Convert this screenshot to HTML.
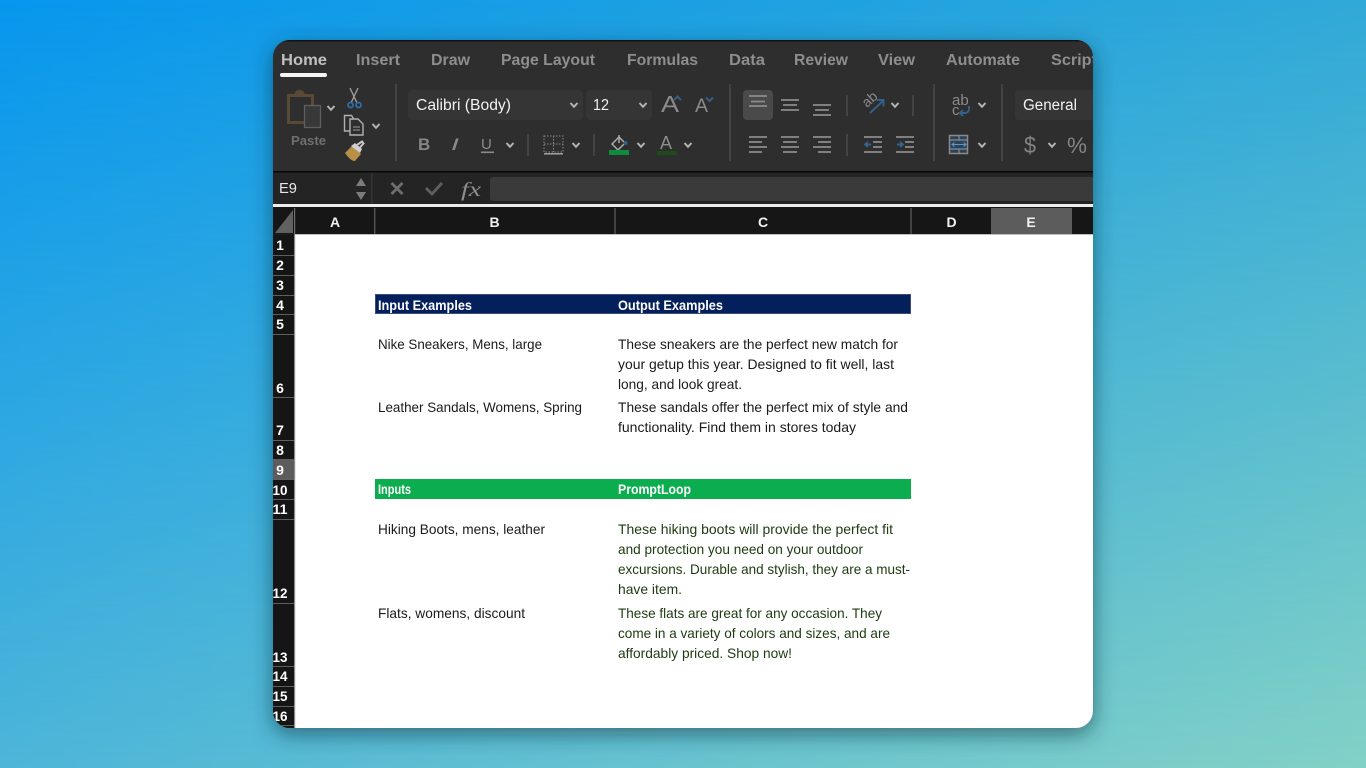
<!DOCTYPE html>
<html><head><meta charset="utf-8"><title>Excel</title>
<style>
html,body{margin:0;padding:0;width:1366px;height:768px;overflow:hidden;background:#2ba6dc}
svg{display:block;position:absolute;left:0;top:0}
text{font-family:"Liberation Sans",sans-serif}
.tab{font-size:16px;font-weight:bold;fill:#8e8e8e}
.row{font-size:14px;font-weight:bold;fill:#fff;text-anchor:middle}
.col{font-size:14px;font-weight:bold;fill:#f2f2f2;text-anchor:middle}
.cell{font-size:14px;fill:#1a1a1a}
.grn{font-size:14px;fill:#1d3a10}
.hd{font-size:14px;font-weight:bold;fill:#fff}
.dd{font-size:15.500px;fill:#f2f2f2}
.ln{stroke:#8c8c8c;stroke-width:1.8}
.blu{fill:none;stroke:#33618c;stroke-width:1.9}
.sep{stroke:#4c4c4c;stroke-width:1.5}
.chev{fill:none;stroke:#b5b5b5;stroke-width:2}
</style></head><body>
<svg width="1366" height="768" viewBox="0 0 1366 768" xmlns="http://www.w3.org/2000/svg">
<defs>
<linearGradient id="bgT" x1="0" y1="0" x2="1" y2="0"><stop offset="0" stop-color="#0797ee"/><stop offset="1" stop-color="#31a9d8"/></linearGradient>
<linearGradient id="bgB" x1="0" y1="0" x2="1" y2="0"><stop offset="0" stop-color="#4db5d8"/><stop offset="1" stop-color="#83d1c6"/></linearGradient>
<linearGradient id="vfade" x1="0" y1="0" x2="0" y2="1"><stop offset="0" stop-color="#000"/><stop offset="1" stop-color="#fff"/></linearGradient>
<mask id="vm"><rect width="1366" height="768" fill="url(#vfade)"/></mask>
<filter id="sh" x="-10%" y="-10%" width="120%" height="120%"><feDropShadow dx="0" dy="6" stdDeviation="11" flood-color="#0a3040" flood-opacity=".6"/></filter>
<clipPath id="win"><rect x="273" y="40" width="820" height="688" rx="17"/></clipPath>
<polyline id="c" points="-3.500,-2 0,1.800 3.500,-2" class="chev"/>
</defs>
<rect width="1366" height="768" fill="url(#bgT)"/>
<rect width="1366" height="768" fill="url(#bgB)" mask="url(#vm)"/>
<rect x="273" y="40" width="820" height="688" rx="17" fill="#222" filter="url(#sh)"/>
<g clip-path="url(#win)">
<rect x="273" y="40" width="820" height="131" fill="#2e2e2e"/>
<rect x="273" y="40" width="820" height="1.500" fill="#111"/>
<text class="tab" x="281" y="65" textLength="46" lengthAdjust="spacingAndGlyphs" style="fill:#c0c0c0">Home</text>
<text class="tab" x="356" y="65" textLength="44" lengthAdjust="spacingAndGlyphs">Insert</text>
<text class="tab" x="431" y="65" textLength="39" lengthAdjust="spacingAndGlyphs">Draw</text>
<text class="tab" x="501" y="65" textLength="94" lengthAdjust="spacingAndGlyphs">Page Layout</text>
<text class="tab" x="627" y="65" textLength="71" lengthAdjust="spacingAndGlyphs">Formulas</text>
<text class="tab" x="729" y="65" textLength="36" lengthAdjust="spacingAndGlyphs">Data</text>
<text class="tab" x="794" y="65" textLength="54" lengthAdjust="spacingAndGlyphs">Review</text>
<text class="tab" x="878" y="65" textLength="37" lengthAdjust="spacingAndGlyphs">View</text>
<text class="tab" x="946" y="65" textLength="74" lengthAdjust="spacingAndGlyphs">Automate</text>
<text class="tab" x="1051" y="65" textLength="46" lengthAdjust="spacingAndGlyphs">Script</text>
<rect x="280" y="73" width="47" height="4" rx="2" fill="#f4f4f4"/>

<!-- paste -->
<path d="M287 94h7l2.500-3.500 3 -1 3 1 2.500 3.500h9v11h-3v-8h-21v24h17v3h-20z" fill="#5a4934"/>
<rect x="304.500" y="105.500" width="16" height="22" fill="#383838" stroke="#5e5e5e" stroke-width="1.300"/>
<use href="#c" x="331" y="108"/>
<text x="291" y="145" font-size="13" font-weight="bold" fill="#6f6f6f" textLength="35" lengthAdjust="spacingAndGlyphs">Paste</text>
<!-- scissors -->
<path d="M350 88l7 15M358 88l-7 15" stroke="#a2a2a2" stroke-width="1.300" fill="none"/>
<circle cx="350.500" cy="105" r="2.500" fill="none" stroke="#2f6ea8" stroke-width="1.800"/>
<circle cx="358.500" cy="105" r="2.500" fill="none" stroke="#2f6ea8" stroke-width="1.800"/>
<!-- copy -->
<path d="M350 131h-5.500v-15.500h7l2 3" fill="none" stroke="#b0b0b0" stroke-width="1.400"/>
<path d="M350 119h8l5 5v11h-13z" fill="#2e2e2e" stroke="#b0b0b0" stroke-width="1.400"/>
<path d="M353 127h7M353 130h7" stroke="#999" stroke-width="1"/>
<use href="#c" x="376" y="126"/>
<!-- brush -->
<path d="M345 153l7-7 9 8-6 7c-4 0-7-4-10-8z" fill="#b98f45"/>
<path d="M351 146l4-3 7 6-2 4z" fill="#d0d0d0"/>
<path d="M357 145l5-3.500 1.500 2-4 4.500" fill="none" stroke="#c8c8c8" stroke-width="2"/>
<line class="sep" x1="396" y1="84" x2="396" y2="161"/>

<!-- font -->
<rect x="408" y="90" width="175" height="30" rx="4" fill="#353535"/>
<text class="dd" x="416" y="110" textLength="95" lengthAdjust="spacingAndGlyphs">Calibri (Body)</text>
<use href="#c" x="574" y="105"/>
<rect x="586" y="90" width="66" height="30" rx="4" fill="#353535"/>
<text class="dd" x="593" y="110" textLength="16" lengthAdjust="spacingAndGlyphs">12</text>
<use href="#c" x="643" y="105"/>
<text x="661" y="112" font-size="23" fill="#8b8b8b" textLength="18" lengthAdjust="spacingAndGlyphs">A</text>
<path d="M674 100l3.500-3.500 3.500 3.500" fill="none" stroke="#365f86" stroke-width="2"/>
<text x="695" y="112" font-size="19" fill="#8b8b8b" textLength="13" lengthAdjust="spacingAndGlyphs">A</text>
<path d="M706 97.500l3.500 3.500 3.500-3.500" fill="none" stroke="#365f86" stroke-width="2"/>
<!-- B I U -->
<text x="418" y="150" font-size="17" font-weight="bold" fill="#868686">B</text>
<text x="451" y="150" font-size="17" font-style="italic" fill="#8a8a8a" textLength="8" lengthAdjust="spacingAndGlyphs">I</text>
<text x="481" y="149" font-size="15" fill="#8a8a8a">U</text>
<rect x="481" y="151.500" width="13" height="1.600" fill="#8a8a8a"/>
<use href="#c" x="510" y="145"/>
<line class="sep" x1="528" y1="134" x2="528" y2="156"/>
<!-- borders -->
<rect x="544" y="136" width="19" height="16" fill="none" stroke="#888" stroke-width="1" stroke-dasharray="1.500 1.500"/>
<path d="M553.500 136v16M544 144h19" stroke="#888" stroke-width="1" stroke-dasharray="1.500 1.500"/>
<rect x="544" y="153" width="19" height="1.600" fill="#9a9a9a"/>
<use href="#c" x="576" y="145"/>
<line class="sep" x1="594" y1="134" x2="594" y2="156"/>
<!-- fill -->
<path d="M612 144l7-7 6 6-7 7z" fill="none" stroke="#aaa" stroke-width="1.500"/>
<path d="M619 143v-8" stroke="#aaa" stroke-width="1.500"/>
<circle cx="625.500" cy="143" r="2" fill="#35608a"/>
<rect x="609" y="150" width="20" height="5" fill="#0f8a3f"/>
<use href="#c" x="641" y="145"/>
<text x="660" y="149" font-size="18" fill="#8d8d8d">A</text>
<rect x="657" y="151" width="20" height="4" fill="#1f4a1a"/>
<use href="#c" x="688" y="145"/>
<line class="sep" x1="730" y1="84" x2="730" y2="161"/>

<!-- align -->
<rect x="743" y="90" width="30" height="30" rx="4" fill="#4a4a4a"/>
<path class="ln" d="M749 96h18M751 101.500h14M749 106h18"/>
<path class="ln" d="M781 100h18M783 105h14M781 110h18"/>
<path class="ln" d="M813 105h18M815 110h14M813 115h18"/>
<path class="ln" d="M749 137h18M749 142h13M749 147h18M749 152h13"/>
<path class="ln" d="M781 137h18M783 142h14M781 147h18M783 152h14"/>
<path class="ln" d="M813 137h18M818 142h13M813 147h18M818 152h13"/>
<line class="sep" x1="847" y1="95" x2="847" y2="116"/>
<line class="sep" x1="847" y1="134" x2="847" y2="156"/>
<!-- orientation -->
<text x="0" y="0" font-size="14" fill="#8c8c8c" transform="translate(867 108) rotate(-42)">ab</text>
<path class="blu" d="M870 113l13-12M877 100h6.500v6.500"/>
<use href="#c" x="895" y="105"/>
<line class="sep" x1="913" y1="95" x2="913" y2="116"/>
<!-- indent -->
<path class="ln" d="M864 137h18M873 142h9M873 147h9M864 152h18"/>
<path class="blu" d="M871 144.500h-6M868 142l-3 2.500 3 2.500"/>
<path class="ln" d="M896 137h18M905 142h9M905 147h9M896 152h18"/>
<path class="blu" d="M897 144.500h6M900 142l3 2.500-3 2.500"/>
<line class="sep" x1="934" y1="84" x2="934" y2="161"/>
<!-- wrap -->
<text x="952" y="105" font-size="15" fill="#8c8c8c">ab</text>
<text x="952" y="115" font-size="15" fill="#8c8c8c">c</text>
<path class="blu" d="M969 106v3a4 4 0 0 1-4 4h-5M963 110l-3 3 3 3"/>
<use href="#c" x="982" y="105"/>
<!-- merge -->
<rect x="949.500" y="135.500" width="18" height="18" fill="#2b4358" stroke="#8a8a8a" stroke-width="1.500"/>
<path d="M950 140h18M950 149h18M959 136v4M959 149v4" stroke="#8a8a8a" stroke-width="1.200"/>
<path d="M952 144.500h14M954.500 142.500l-2.500 2 2.500 2M963.500 142.500l2.500 2-2.500 2" fill="none" stroke="#5a96c8" stroke-width="1.100"/>
<use href="#c" x="982" y="145"/>
<line class="sep" x1="1002" y1="84" x2="1002" y2="161"/>
<rect x="1015" y="90" width="90" height="30" rx="4" fill="#353535"/>
<text class="dd" x="1023" y="110" textLength="54" lengthAdjust="spacingAndGlyphs">General</text>
<text x="1024" y="153" font-size="23" fill="#848484" textLength="12" lengthAdjust="spacingAndGlyphs">$</text>
<use href="#c" x="1052" y="145"/>
<text x="1067" y="153" font-size="22" fill="#848484" textLength="20" lengthAdjust="spacingAndGlyphs">%</text>

<!-- formula bar -->
<rect x="273" y="171" width="820" height="33" fill="#242424"/>
<rect x="273" y="171" width="820" height="1.600" fill="#0a0a0a"/>
<rect x="371" y="173" width="1.500" height="31" fill="#333"/>
<text x="279" y="193" font-size="15" fill="#e8e8e8" textLength="18" lengthAdjust="spacingAndGlyphs">E9</text>
<path d="M356 186l5-8 5 8z" fill="#7c7c7c"/>
<path d="M356 192l5 8 5-8z" fill="#7c7c7c"/>
<path d="M391.500 183l11 11M402.500 183l-11 11" stroke="#6e6e6e" stroke-width="2.800"/>
<path d="M426 188l6 6 10-11" fill="none" stroke="#5f5f5f" stroke-width="2.800"/>
<text x="461" y="196" font-size="20" font-style="italic" fill="#8e8e8e" style="font-family:'Liberation Serif',serif" textLength="20" lengthAdjust="spacingAndGlyphs">fx</text>
<rect x="490" y="177" width="610" height="24" rx="3" fill="#3a3a3a"/>
<rect x="273" y="204" width="820" height="3" fill="#ededed"/>

<!-- col headers -->
<rect x="273" y="207" width="820" height="27.500" fill="#161616"/>
<path d="M275 233l18-23v23z" fill="#616161"/>
<rect x="294" y="208" width="1.200" height="27" fill="#6e6e6e"/>
<rect x="374.300" y="208" width="1" height="27" fill="#6e6e6e"/>
<rect x="614.500" y="208" width="1" height="27" fill="#6e6e6e"/>
<rect x="910.500" y="208" width="1" height="27" fill="#6e6e6e"/>
<rect x="991" y="208" width="81" height="27" fill="#5c5c5c"/>
<text class="col" x="335" y="227">A</text>
<text class="col" x="494.500" y="227">B</text>
<text class="col" x="763" y="227">C</text>
<text class="col" x="951.500" y="227">D</text>
<text class="col" x="1031" y="227">E</text>

<!-- sheet -->
<rect x="295" y="235" width="800" height="495" fill="#fff"/>
<rect x="295" y="234" width="800" height="1" fill="#bdbdbd"/>
<!-- row headers -->
<rect x="273" y="235" width="22" height="495" fill="#151515"/>
<rect x="294" y="235" width="1.200" height="495" fill="#8d8d8d"/>
<rect x="273" y="460" width="21" height="20" fill="#5c5c5c"/>
<g fill="#5f5f5f">
<rect x="273" y="255" width="21" height="1"/><rect x="273" y="275" width="21" height="1"/><rect x="273" y="295" width="21" height="1"/><rect x="273" y="314" width="21" height="1"/><rect x="273" y="334" width="21" height="1"/><rect x="273" y="397" width="21" height="1"/><rect x="273" y="440" width="21" height="1"/><rect x="273" y="459" width="21" height="1"/><rect x="273" y="479" width="21" height="1"/><rect x="273" y="499" width="21" height="1"/><rect x="273" y="519" width="21" height="1"/><rect x="273" y="603" width="21" height="1"/><rect x="273" y="666" width="21" height="1"/><rect x="273" y="686" width="21" height="1"/><rect x="273" y="706" width="21" height="1"/><rect x="273" y="725" width="21" height="1"/>
</g>
<text class="row" x="280" y="250">1</text>
<text class="row" x="280" y="270">2</text>
<text class="row" x="280" y="290">3</text>
<text class="row" x="280" y="310">4</text>
<text class="row" x="280" y="329">5</text>
<text class="row" x="280" y="393">6</text>
<text class="row" x="280" y="435">7</text>
<text class="row" x="280" y="455">8</text>
<text class="row" x="280" y="475">9</text>
<text class="row" x="280" y="495" textLength="15" lengthAdjust="spacingAndGlyphs">10</text>
<text class="row" x="280" y="514" textLength="15" lengthAdjust="spacingAndGlyphs">11</text>
<text class="row" x="280" y="598" textLength="15" lengthAdjust="spacingAndGlyphs">12</text>
<text class="row" x="280" y="662" textLength="15" lengthAdjust="spacingAndGlyphs">13</text>
<text class="row" x="280" y="681" textLength="15" lengthAdjust="spacingAndGlyphs">14</text>
<text class="row" x="280" y="701" textLength="15" lengthAdjust="spacingAndGlyphs">15</text>
<text class="row" x="280" y="721" textLength="15" lengthAdjust="spacingAndGlyphs">16</text>

<!-- table -->
<rect x="375" y="294" width="536" height="20" fill="#04205c"/>
<rect x="375.500" y="294.500" width="535" height="19" fill="none" stroke="#3a4d7c"/>
<text class="hd" x="378" y="310" textLength="94" lengthAdjust="spacingAndGlyphs">Input Examples</text>
<text class="hd" x="618" y="310" textLength="105" lengthAdjust="spacingAndGlyphs">Output Examples</text>

<text class="cell" x="378" y="349" textLength="164" lengthAdjust="spacingAndGlyphs">Nike Sneakers, Mens, large</text>
<text class="cell" x="618" y="349" textLength="280" lengthAdjust="spacingAndGlyphs">These sneakers are the perfect new match for</text>
<text class="cell" x="618" y="369" textLength="276" lengthAdjust="spacingAndGlyphs">your getup this year. Designed to fit well, last</text>
<text class="cell" x="618" y="389" textLength="124" lengthAdjust="spacingAndGlyphs">long, and look great.</text>
<text class="cell" x="378" y="412" textLength="204" lengthAdjust="spacingAndGlyphs">Leather Sandals, Womens, Spring</text>
<text class="cell" x="618" y="412" textLength="290" lengthAdjust="spacingAndGlyphs">These sandals offer the perfect mix of style and</text>
<text class="cell" x="618" y="432" textLength="238" lengthAdjust="spacingAndGlyphs">functionality. Find them in stores today</text>

<rect x="375" y="479" width="536" height="20" fill="#0bad4e"/>
<text class="hd" x="378" y="494" textLength="33" lengthAdjust="spacingAndGlyphs">Inputs</text>
<text class="hd" x="618" y="494" textLength="73" lengthAdjust="spacingAndGlyphs">PromptLoop</text>

<text class="cell" x="378" y="534" textLength="167" lengthAdjust="spacingAndGlyphs">Hiking Boots, mens, leather</text>
<text class="grn" x="618" y="534" textLength="275" lengthAdjust="spacingAndGlyphs">These hiking boots will provide the perfect fit</text>
<text class="grn" x="618" y="554" textLength="245" lengthAdjust="spacingAndGlyphs">and protection you need on your outdoor</text>
<text class="grn" x="618" y="574" textLength="292" lengthAdjust="spacingAndGlyphs">excursions. Durable and stylish, they are a must-</text>
<text class="grn" x="618" y="594" textLength="64" lengthAdjust="spacingAndGlyphs">have item.</text>
<text class="cell" x="378" y="618" textLength="147" lengthAdjust="spacingAndGlyphs">Flats, womens, discount</text>
<text class="grn" x="618" y="618" textLength="264" lengthAdjust="spacingAndGlyphs">These flats are great for any occasion. They</text>
<text class="grn" x="618" y="638" textLength="272" lengthAdjust="spacingAndGlyphs">come in a variety of colors and sizes, and are</text>
<text class="grn" x="618" y="658" textLength="174" lengthAdjust="spacingAndGlyphs">affordably priced. Shop now!</text>
</g>
</svg>
</body></html>
